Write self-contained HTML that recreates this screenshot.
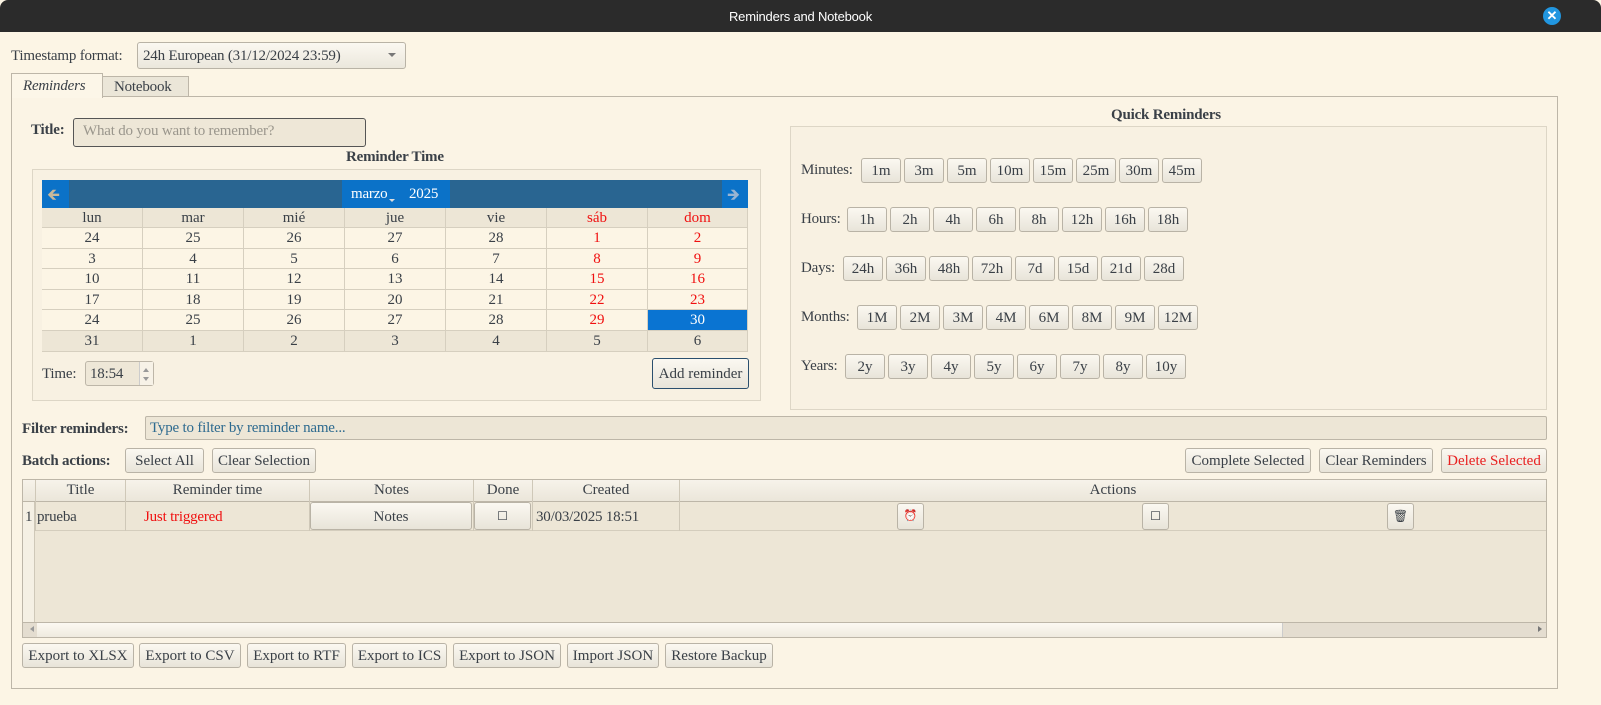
<!DOCTYPE html>
<html><head><meta charset="utf-8">
<style>
*{box-sizing:border-box;margin:0;padding:0}
body{width:1601px;height:705px;background:#fcf5e5;font-family:"Liberation Serif",serif;font-size:15px;color:#3a4047;position:relative;overflow:hidden}
.a{position:absolute}
.b{position:absolute;height:25px;border:1px solid #b9b3a6;border-radius:3px;background:linear-gradient(#fbf8f1,#e8e4d9);text-align:center;line-height:24px;white-space:nowrap}
.t{position:absolute;white-space:nowrap;margin-top:3px;letter-spacing:-0.2px}
.cal div{position:absolute;text-align:center;border-right:1px solid #d6cfbf;border-bottom:1px solid #d6cfbf;line-height:21px;height:21px}
.red{color:#f01010}
</style></head><body>
<div class="a" style="left:0;top:0;width:1601px;height:32px;background:#2b2b2b;border-radius:8px 8px 0 0"></div>
<div class="t" style="left:0;width:1601px;top:6px;text-align:center;color:#fff;font-family:'Liberation Sans',sans-serif;font-size:13px">Reminders and Notebook</div>
<div class="a" style="left:1543px;top:7px;width:18px;height:18px;border-radius:50%;background:#2196e0;color:#fff;font:bold 13px/18px 'Liberation Sans',sans-serif;text-align:center">✕</div>

<div class="t" style="left:11px;top:45px">Timestamp format:</div>
<div class="a" style="left:137px;top:42px;width:269px;height:27px;border:1px solid #b9b3a6;border-radius:3px;background:linear-gradient(#fbf8f1,#ebe7dc)"></div>
<div class="t" style="left:143px;top:45px">24h European (31/12/2024 23:59)</div>
<div class="a" style="left:388px;top:53px;border:4px solid transparent;border-top:4px solid #777"></div>

<div class="a" style="left:11px;top:96px;width:1547px;height:593px;border:1px solid #bdb6a8;background:#fbf4e5"></div>
<div class="a" style="left:102px;top:76px;width:87px;height:21px;border:1px solid #bdb6a8;background:#ebe6d8"></div>
<div class="t" style="left:114px;top:76px">Notebook</div>
<div class="a" style="left:11px;top:73px;width:92px;height:25px;border:1px solid #bdb6a8;border-bottom:none;background:#fcf6e8"></div>
<div class="t" style="left:23px;top:75px;font-style:italic">Reminders</div>

<div class="t" style="left:31px;top:119px;font-weight:bold">Title:</div>
<div class="a" style="left:73px;top:118px;width:293px;height:29px;border:1px solid #555;border-radius:3px;background:#eee7d7"></div>
<div class="t" style="left:83px;top:120px;color:#9a968c">What do you want to remember?</div>
<div class="t" style="left:346px;top:146px;font-weight:bold">Reminder Time</div>
<div class="a" style="left:32px;top:169px;width:729px;height:232px;border:1px solid #ddd6c6;background:#f8f1e2"></div>

<div class="a" style="left:42px;top:180px;width:706px;height:28px;background:#296591"></div>
<div class="a" style="left:42px;top:180px;width:27px;height:28px;background:#0b72c8"></div>
<div class="t" style="left:47px;top:181px;color:#c8b89a;font-size:16px">🡸</div>
<div class="a" style="left:722px;top:180px;width:26px;height:28px;background:#0b72c8"></div>
<div class="t" style="left:727px;top:181px;color:#9ab4d2;font-size:16px">🡺</div>
<div class="a" style="left:342px;top:180px;width:108px;height:28px;background:#0b72c8"></div>
<div class="t" style="left:351px;top:183px;color:#fff">marzo</div>
<div class="a" style="left:389px;top:199px;border:3px solid transparent;border-top:3px solid #ddd"></div>
<div class="t" style="left:409px;top:183px;color:#fff">2025</div>

<div class="cal">
<div style="left:42px;top:208px;width:706px;height:124px;background:#fcf5e5;border:none"></div>
<div style="left:42px;top:208px;width:706px;height:20px;background:#ede6d6;border:none"></div>
<div style="left:42px;top:331px;width:706px;height:21px;background:#ede6d6;border:none"></div>
<div style="left:648px;top:310px;width:100px;height:21px;background:#0a74d2;border:none"></div>
</div>
<div class="cal" id="cal"></div>

<div class="t" style="left:42px;top:363px">Time:</div>
<div class="a" style="left:85px;top:361px;width:69px;height:25px;border:1px solid #bdb6a8;border-radius:3px;background:#eee7d7"></div>
<div class="a" style="left:139px;top:362px;width:14px;height:23px;border-left:1px solid #ccc;background:#f7f2e7"></div>
<div class="a" style="left:143px;top:365px;border:3px solid transparent;border-bottom:4px solid #999"></div>
<div class="a" style="left:143px;top:377px;border:3px solid transparent;border-top:4px solid #999"></div>
<div class="t" style="left:90px;top:363px">18:54</div>
<div class="b" style="left:652px;top:358px;width:97px;height:31px;line-height:30px;border-color:#2a4f6e">Add reminder</div>

<div class="t" style="left:1111px;top:104px;font-weight:bold">Quick Reminders</div>
<div class="a" style="left:790px;top:126px;width:757px;height:284px;border:1px solid #ddd6c6;background:#f8f1e2"></div>
<div id="q"></div>

<div class="t" style="left:22px;top:418px;font-weight:bold">Filter reminders:</div>
<div class="a" style="left:145px;top:416px;width:1402px;height:24px;border:1px solid #bdb6a8;border-radius:2px;background:#ede6d6"></div>
<div class="t" style="left:150px;top:417px;color:#2d6a8f">Type to filter by reminder name...</div>

<div class="t" style="left:22px;top:450px;font-weight:bold">Batch actions:</div>
<div class="b" style="left:125px;top:448px;width:79px">Select All</div>
<div class="b" style="left:212px;top:448px;width:104px">Clear Selection</div>
<div class="b" style="left:1185px;top:448px;width:126px">Complete Selected</div>
<div class="b" style="left:1319px;top:448px;width:114px">Clear Reminders</div>
<div class="b" style="left:1441px;top:448px;width:106px;color:#e82020">Delete Selected</div>

<div class="a" style="left:22px;top:479px;width:1525px;height:159px;border:1px solid #bdb6a8;background:#ede6d6"></div>
<div class="a" style="left:23px;top:480px;width:1523px;height:22px;background:linear-gradient(#f7f3ea,#ebe6da);border-bottom:1px solid #bdb6a8"></div>
<div class="a" style="left:23px;top:502px;width:12px;height:120px;background:#f5f0e4;border-right:1px solid #cfc8b8"></div>
<div class="a" style="left:35px;top:530px;width:1511px;height:1px;background:#d4cdbd"></div>
<div id="hd"></div>
<div class="t" style="left:25px;top:506px">1</div>
<div class="t" style="left:37px;top:506px">prueba</div>
<div class="t" style="left:144px;top:506px;color:#f01010">Just triggered</div>
<div class="b" style="left:310px;top:502px;width:162px;height:28px;line-height:28px">Notes</div>
<div class="b" style="left:474px;top:502px;width:57px;height:28px;line-height:27px;font-size:12px">☐</div>
<div class="t" style="left:536px;top:506px">30/03/2025 18:51</div>
<div class="b" style="left:897px;top:503px;width:27px;height:27px;font-size:11px;line-height:25px">⏰</div>
<div class="b" style="left:1142px;top:503px;width:27px;height:27px;font-size:12px;line-height:25px">☐</div>
<div class="b" style="left:1387px;top:503px;width:27px;height:27px;font-size:12px;line-height:25px">🗑</div>

<div class="a" style="left:23px;top:622px;width:1523px;height:15px;background:#e4ddd0;border-top:1px solid #bdb6a8"></div>
<div class="a" style="left:37px;top:623px;width:1246px;height:14px;background:linear-gradient(#fcf9f2,#efeadf);border-right:1px solid #ccc"></div>
<div class="a" style="left:27px;top:626px;border:3px solid transparent;border-right:4px solid #999"></div>
<div class="a" style="left:1538px;top:626px;border:3px solid transparent;border-left:4px solid #777"></div>

<div class="b" style="left:22px;top:643px;width:112px">Export to XLSX</div>
<div class="b" style="left:139px;top:643px;width:102px">Export to CSV</div>
<div class="b" style="left:247px;top:643px;width:99px">Export to RTF</div>
<div class="b" style="left:352px;top:643px;width:95px">Export to ICS</div>
<div class="b" style="left:453px;top:643px;width:108px">Export to JSON</div>
<div class="b" style="left:567px;top:643px;width:92px">Import JSON</div>
<div class="b" style="left:665px;top:643px;width:108px">Restore Backup</div>

<script>
var xs=[42,143,244,345,446,547,648,748];
var wd=["lun","mar","mié","jue","vie","sáb","dom"];
var rows=[[24,25,26,27,28,1,2],[3,4,5,6,7,8,9],[10,11,12,13,14,15,16],[17,18,19,20,21,22,23],[24,25,26,27,28,29,30],[31,1,2,3,4,5,6]];
var h="",ys=[208,228,249,269,290,310,331,352];
for(var r=0;r<7;r++)for(var c=0;c<7;c++){
 var txt=r==0?wd[c]:rows[r-1][c];
 var cls=(c>=5&&r<6)?"red":"";
 var st="";
 if(r==5&&c==6){cls="";st="color:#fff;";}
 h+='<div class="'+cls+'" style="'+st+'left:'+xs[c]+'px;top:'+ys[r]+'px;width:'+(xs[c+1]-xs[c])+'px;height:'+(ys[r+1]-ys[r])+'px">'+txt+'</div>';
}
document.getElementById("cal").innerHTML=h;
var q=[["Minutes:",158,861,["1m","3m","5m","10m","15m","25m","30m","45m"]],
["Hours:",207,847,["1h","2h","4h","6h","8h","12h","16h","18h"]],
["Days:",256,843,["24h","36h","48h","72h","7d","15d","21d","28d"]],
["Months:",305,857,["1M","2M","3M","4M","6M","8M","9M","12M"]],
["Years:",354,845,["2y","3y","4y","5y","6y","7y","8y","10y"]]];
h="";
q.forEach(function(g){h+='<div class="t" style="left:801px;top:'+(g[1]+1)+'px">'+g[0]+'</div>';
g[3].forEach(function(l,i){h+='<div class="b" style="left:'+(g[2]+i*43)+'px;top:'+g[1]+'px;width:40px">'+l+'</div>';});});
document.getElementById("q").innerHTML=h;
var hx=[[35,125,"Title"],[125,309,"Reminder time"],[309,473,"Notes"],[473,532,"Done"],[532,679,"Created"],[679,1546,"Actions"]];
h="";
hx.forEach(function(c){h+='<div class="a" style="left:'+c[0]+'px;width:'+(c[1]-c[0])+'px;top:480px;text-align:center;border-left:1px solid #cfc8b8;height:51px;padding-top:2px">'+c[2]+'</div>';});
document.getElementById("hd").innerHTML=h;
</script>
</body></html>
